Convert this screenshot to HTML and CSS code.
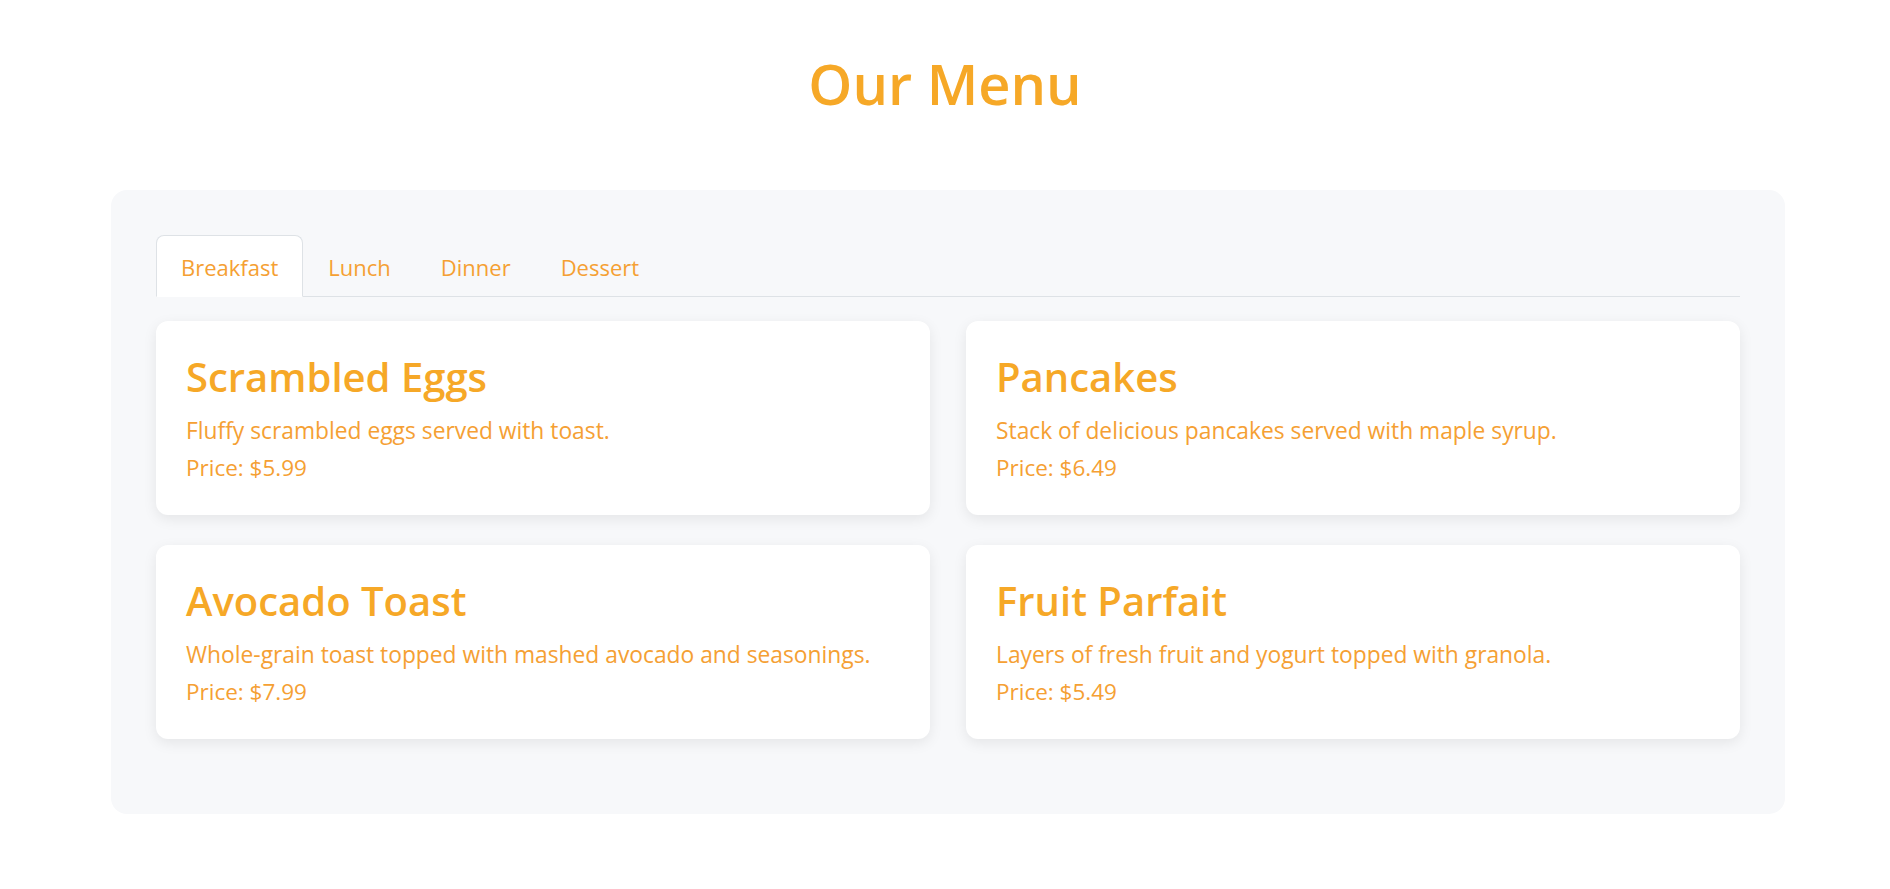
FILE: index.html
```html
<!DOCTYPE html>
<html lang="en">
<head>
<meta charset="utf-8">
<title>Our Menu</title>
<link rel="stylesheet" href="styles.css">
</head>
<body>
  <h1 class="page-title">Our Menu</h1>
  <section class="menu">
    <ul class="tabs">
      <li class="tab tab-active">Breakfast</li>
      <li class="tab">Lunch</li>
      <li class="tab">Dinner</li>
      <li class="tab">Dessert</li>
    </ul>
    <div class="items">
      <article class="card">
        <h2 class="card-title">Scrambled Eggs</h2>
        <p class="card-desc">Fluffy scrambled eggs served with toast.</p>
        <p class="card-price">Price: $5.99</p>
      </article>
      <article class="card">
        <h2 class="card-title">Pancakes</h2>
        <p class="card-desc">Stack of delicious pancakes served with maple syrup.</p>
        <p class="card-price">Price: $6.49</p>
      </article>
      <article class="card">
        <h2 class="card-title">Avocado Toast</h2>
        <p class="card-desc">Whole-grain toast topped with mashed avocado and seasonings.</p>
        <p class="card-price">Price: $7.99</p>
      </article>
      <article class="card">
        <h2 class="card-title">Fruit Parfait</h2>
        <p class="card-desc">Layers of fresh fruit and yogurt topped with granola.</p>
        <p class="card-price">Price: $5.49</p>
      </article>
    </div>
  </section>
</body>
</html>
```

FILE: styles.css
```css
html, body {
  margin: 0;
  padding: 0;
  background: #ffffff;
}

body {
  font-family: "Open Sans", "Noto Sans", sans-serif;
  color: #f5a033;
}

.page-title {
  margin: 48px 0 72px;
  font-size: 56px;
  line-height: 70px;
  font-weight: 600;
  text-align: center;
  color: #f6a827;
}

.menu {
  margin: 0 105px 0 111px;
  padding: 45px;
  background: #f7f8fa;
  border-radius: 16px;
}

.tabs {
  display: flex;
  list-style: none;
  margin: 0;
  padding: 0;
  border-bottom: 1px solid #dee2e6;
}

.tab {
  margin-bottom: -1px;
  padding: 16px 24px 14px;
  font-size: 22px;
  line-height: 30px;
  border: 1px solid transparent;
  border-top-left-radius: 8px;
  border-top-right-radius: 8px;
  color: #f5a033;
}

.tab-active {
  background: #ffffff;
  border-color: #dee2e6 #dee2e6 #ffffff;
}

.items {
  display: grid;
  grid-template-columns: 1fr 1fr;
  column-gap: 36px;
  row-gap: 30px;
  margin: 24px 0 30px;
}

.card {
  background: #ffffff;
  border-radius: 12px;
  padding: 32px 30px 32px;
  box-shadow: 0 4px 14px rgba(0, 0, 0, 0.08);
}

.card-title {
  margin: 0 0 15px;
  font-size: 40px;
  line-height: 48px;
  font-weight: 600;
  color: #f6a827;
}

.card-desc {
  margin: 0 0 7px;
  font-size: 22.8px;
  line-height: 30px;
}

.card-price {
  margin: 0;
  font-size: 22.5px;
  line-height: 30px;
}
```
